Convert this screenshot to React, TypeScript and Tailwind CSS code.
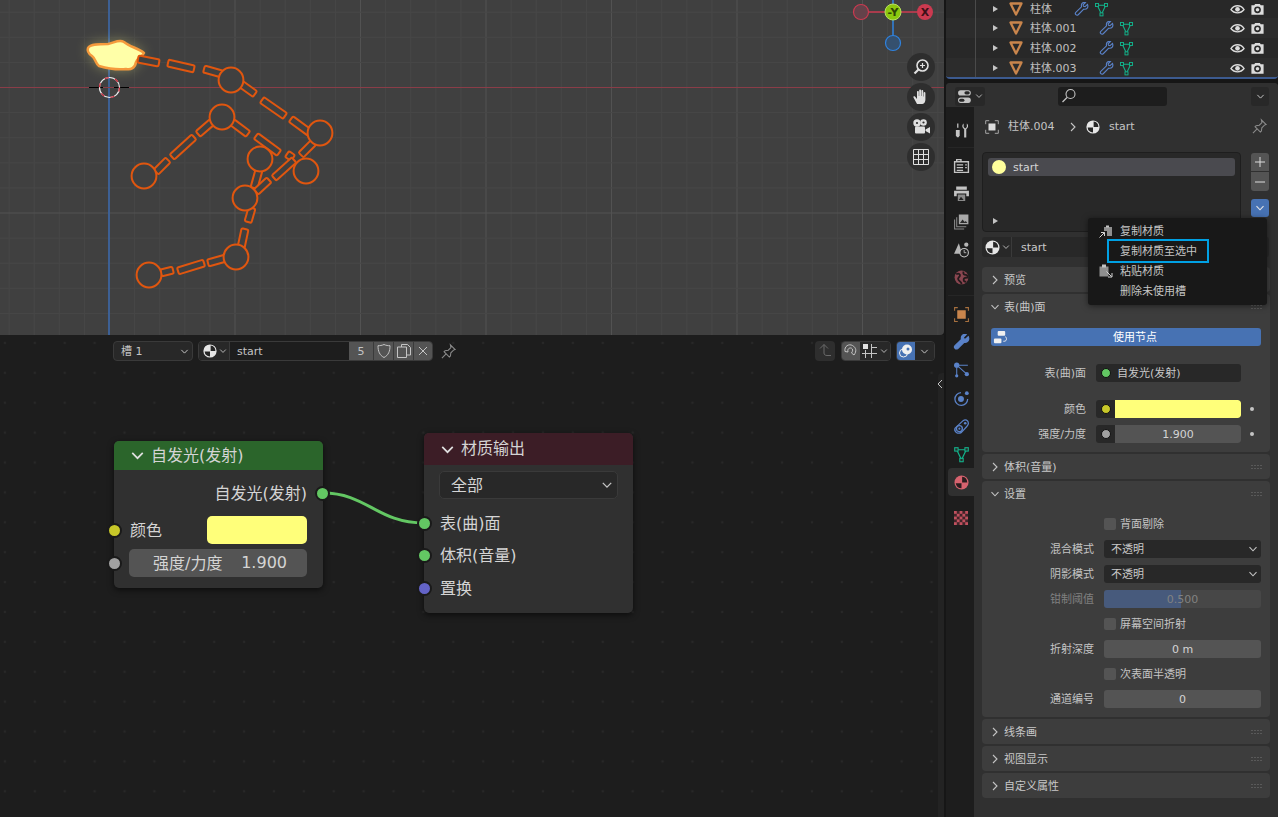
import type { ReactNode } from 'react'

const grey = '#c4c4c4'

function Svg({ size = 17, children }: { size?: number; children: ReactNode }) {
  return (
    <svg width={size} height={size} viewBox="0 0 16 16" fill="none" className="shrink-0">
      {children}
    </svg>
  )
}

function Chevron({ dir = 'down', size = 10, color = grey }: { dir?: 'down' | 'right'; size?: number; color?: string }) {
  return (
    <svg width={size} height={size} viewBox="0 0 10 10" fill="none" className="shrink-0">
      <path d={dir === 'down' ? 'M1.5 3.2 5 6.8l3.5-3.6' : 'M3 1 7 5 3 9'} stroke={color} strokeWidth="1.1" />
    </svg>
  )
}

function MatBall({ size = 16, color = '#e6e6e6', dark = '#262626' }: { size?: number; color?: string; dark?: string }) {
  return (
    <Svg size={size}>
      <circle cx="8" cy="8" r="6.6" fill={color} />
      <path d="M8.6 2.6A5.5 5.5 0 0 1 13.4 8H8.6z" fill={dark} />
      <path d="M2.6 8.6H8v4.8A5.5 5.5 0 0 1 2.6 8.6z" fill={dark} />
    </Svg>
  )
}

function MeshIcon({ size = 16 }: { size?: number }) {
  return (
    <Svg size={size}>
      <path d="M3.5 3.5h9L8 13z" stroke="#12b48c" strokeWidth="1.1" />
      <rect x="1.6" y="1.6" width="3.2" height="3.2" fill="#2b2b2b" stroke="#12b48c" />
      <rect x="11.2" y="1.6" width="3.2" height="3.2" fill="#2b2b2b" stroke="#12b48c" />
      <rect x="6.4" y="11.6" width="3.2" height="3.2" fill="#2b2b2b" stroke="#12b48c" />
    </Svg>
  )
}

function WrenchIcon({ size = 16, color = '#5a82c8', fill = false }: { size?: number; color?: string; fill?: boolean }) {
  return (
    <Svg size={size}>
      <path
        d="M14.4 2.6 11.8 5l-1.6-.4-.5-1.6 2.5-2.4C9.800 0 7.600 1.400 7.900 4.100L8 5.200 1.900 11c-1.500 1.700.7 3.900 2.600 2.600l5.900-5.900c3.400.6 5.200-2 4-5.100z"
        stroke={color}
        strokeWidth="1.200"
        fill={fill ? color : 'none'}
      />
    </Svg>
  )
}

function ObjectTri() {
  return (
    <Svg size={16}>
      <path d="M2.500 2.500h11L8 13.500z" stroke="#c9854c" strokeWidth="2.300" strokeLinejoin="round" />
    </Svg>
  )
}

function EyeIcon() {
  return (
    <Svg size={15}>
      <path d="M1 8c3.500-5.300 10.500-5.300 14 0-3.500 4.700-10.500 4.700-14 0z" stroke="#dcdcdc" strokeWidth="1.400" />
      <circle cx="8" cy="7.800" r="2.500" fill="#dcdcdc" />
    </Svg>
  )
}

function CamIcon() {
  return (
    <Svg size={15}>
      <path d="M1.500 3.500h3l1-1.500h5l1 1.500h3v10h-13z" fill="#dcdcdc" />
      <circle cx="8" cy="8.300" r="3.600" fill="#2b2b2b" />
      <circle cx="8" cy="8.300" r="1.900" fill="#dcdcdc" />
    </Svg>
  )
}

function PinIcon() {
  return (
    <Svg size={17}>
      <path d="M9.800 1.800 14.200 6.200l-1.500.5-2.500 2.500-.4 3-1 1-5-5 1-1 3-.4 2.500-2.500zM5.500 10.500 1.800 14.200" stroke="#8a8a8a" strokeWidth="1" />
    </Svg>
  )
}

function Grip() {
  return (
    <svg width="12" height="6" viewBox="0 0 12 6" className="shrink-0">
      {[0, 1, 2, 3].map((i) =>
        [1, 4].map((y) => <rect key={`${i}-${y}`} x={i * 3 + 0.5} y={y} width="1" height="1" fill="#777" />),
      )}
    </svg>
  )
}

const tabIcons: Record<string, ReactNode> = {
  tool: (
    <Svg>
      <path d="M4.500 1.500v4" stroke={grey} strokeWidth="1.200" />
      <path d="M2.700 7.500h3.600v5l-1 1.800H3.700l-1-1.800z" fill={grey} />
      <path d="M10 1.500v3.200l1.500 1.300L13 4.700V1.500c1.700 1.300 1.700 4-.5 5.200v7.800h-2V6.700C8.300 5.500 8.300 2.800 10 1.500z" fill={grey} />
    </Svg>
  ),
  render: (
    <Svg>
      <path d="M1.500 4.500h13v10h-13zM3.500 2.500h4v2h-4z" stroke={grey} strokeWidth="1.300" />
      <path d="M3.500 7.500h6M3.500 10h6M3.500 12.500h6M11.500 7.500h1.500M11.500 10h1.500" stroke={grey} strokeWidth="1.200" />
    </Svg>
  ),
  output: (
    <Svg>
      <path d="M3 1.500h10v3H3zM1 5.500h14v5h-2.500V8h-9v2.500H1z" fill={grey} />
      <path d="M4.500 9h7v6h-7z" fill="#8a8a8a" />
      <path d="m5.500 14 2-3 2.500 3z" fill="#222" />
    </Svg>
  ),
  layer: (
    <Svg>
      <path d="M5.500 1.500h9v9h-9z" fill="#a8a8a8" />
      <path d="m6.500 9.500 2.500-3.500 2 2.500 1-1 1.500 2z" fill="#2b2b2b" />
      <path d="M3.500 4v9h9M1.500 6v9h9" stroke="#8a8a8a" strokeWidth="1" />
    </Svg>
  ),
  scene: (
    <Svg>
      <path d="M5.500 2 1 12h7.500z" fill="#b5b5b5" />
      <circle cx="12.500" cy="3.500" r="2" fill="#b5b5b5" />
      <circle cx="10.500" cy="11" r="4" fill="#222" stroke={grey} strokeWidth="1" />
      <path d="M10.500 8.500V11h2" stroke={grey} strokeWidth="0.800" />
    </Svg>
  ),
  world: (
    <Svg>
      <circle cx="8" cy="8" r="6.500" fill="#8a4650" />
      <path d="M3 5c2.500-1.500 4 0 3.500 1.500S4 8 5 10s3.500 2 3 4.500M10 2.500c-1 2 .5 3 2 3s2 1.500 2 2.500c-2 0-4 0-4 2s1.500 2 2.500 2" stroke="#241a1c" strokeWidth="1.700" />
    </Svg>
  ),
  object: (
    <Svg>
      <rect x="4" y="4" width="8" height="8" fill="#c9854c" />
      <path d="M1.500 4.500v-3h3M11.500 1.500h3v3M14.500 11.500v3h-3M4.500 14.500h-3v-3" stroke="#a8713f" strokeWidth="1" />
    </Svg>
  ),
  modifier: <WrenchIcon size={17} color="#5a82c8" fill />,
  particles: (
    <Svg>
      <path d="M3.500 3H14M3.500 3v10M3.500 3l9 8" stroke="#5a82c8" strokeWidth="1" />
      <circle cx="3.500" cy="3" r="2.500" fill="#5a82c8" />
      <circle cx="3.500" cy="13" r="1.500" fill="#5a82c8" />
      <circle cx="13" cy="11.500" r="2" fill="#5a82c8" />
    </Svg>
  ),
  physics: (
    <Svg>
      <path d="M13.800 8.500A6 6 0 1 1 7.500 2.500" stroke="#5a82c8" strokeWidth="1.200" />
      <circle cx="7.500" cy="8.500" r="2.800" fill="#5a82c8" />
      <circle cx="13" cy="3" r="1.800" fill="#5a82c8" />
    </Svg>
  ),
  constraint: (
    <Svg>
      <path d="M2 9.500 9.500 2.500c2-1.500 5-.5 5 2.500 0 1-.5 2-1.500 3l-5 5.500C4.500 15.500.5 13 2 9.500z" stroke="#5a82c8" strokeWidth="1.200" />
      <circle cx="6" cy="10" r="2.800" stroke="#5a82c8" strokeWidth="1.300" />
      <circle cx="6" cy="10" r="1" fill="#5a82c8" />
      <circle cx="11.500" cy="5" r="1.200" fill="#5a82c8" />
    </Svg>
  ),
  data: <MeshIcon size={17} />,
  material: <MatBall size={17} color="#d6626e" dark="#2a1c1e" />,
  texture: (
    <svg width="14" height="14" viewBox="0 0 5 5" className="shrink-0">
      <rect width="5" height="5" fill="#40252a" />
      {[0, 2, 4, 6, 8, 10, 12, 14, 16, 18, 20, 22, 24].map((n) => (
        <rect key={n} x={n % 5} y={Math.floor(n / 5)} width="1" height="1" fill="#c0505e" />
      ))}
    </svg>
  ),
}

function Tab({ name, active }: { name: string; active?: boolean }) {
  return (
    <div className={`flex h-[28px] items-center justify-center rounded-l ${active ? 'bg-[#303030]' : ''}`}>
      {tabIcons[name]}
    </div>
  )
}

function Tabs() {
  return (
    <div className="flex w-[28px] shrink-0 flex-col bg-[#1d1d1d] pt-[9px] pl-[2px]">
      <Tab name="tool" />
      <div className="mt-[3px] mb-[3px] h-px bg-[#262626]" />
      <Tab name="render" />
      <Tab name="output" />
      <Tab name="layer" />
      <Tab name="scene" />
      <Tab name="world" />
      <div className="mt-[4px] mb-[4px] h-px bg-[#262626]" />
      <Tab name="object" />
      <Tab name="modifier" />
      <Tab name="particles" />
      <Tab name="physics" />
      <Tab name="constraint" />
      <Tab name="data" />
      <Tab name="material" active />
      <div className="mt-[8px]">
        <Tab name="texture" />
      </div>
    </div>
  )
}

function OutlinerRow({ name, h, bg, gap }: { name: string; h: string; bg: string; gap: string }) {
  return (
    <div className={`flex items-center pl-[47px] ${h} ${bg}`}>
      <span className="mr-[10px] h-0 w-0 border-y-[3px] border-l-[5px] border-y-transparent border-l-[#c4c4c4]" />
      <ObjectTri />
      <span className={`ml-[6px] ${gap} text-[#c0c0c0]`}>{name}</span>
      <WrenchIcon size={15} />
      <span className="ml-[5px]">
        <MeshIcon size={15} />
      </span>
      <div className="ml-auto flex items-center gap-[5px] pr-[13px]">
        <EyeIcon />
        <CamIcon />
      </div>
    </div>
  )
}

function Outliner() {
  return (
    <div className="relative h-[79px] shrink-0 overflow-hidden rounded-b border-b-2 border-[#3c5a8f] bg-[#282828]">
      <div className="absolute top-0 bottom-0 left-[29px] w-px bg-[#4a4a4a]" />
      <OutlinerRow name="柱体" h="h-[18px]" bg="bg-[#282828]" gap="w-[44px]" />
      <OutlinerRow name="柱体.001" h="h-[20px]" bg="bg-[#2c2c2c]" gap="w-[69px]" />
      <OutlinerRow name="柱体.002" h="h-[20px]" bg="bg-[#282828]" gap="w-[69px]" />
      <OutlinerRow name="柱体.003" h="h-[20px]" bg="bg-[#2c2c2c]" gap="w-[69px]" />
    </div>
  )
}

function PanelHeader({ title, open }: { title: string; open?: boolean }) {
  return (
    <div className="flex h-[25px] items-center pr-[7px] pl-[8px]">
      <Chevron dir={open ? 'down' : 'right'} />
      <span className="ml-[4px] pt-[2px] text-[#c8c8c8]">{title}</span>
      <span className="ml-auto">
        <Grip />
      </span>
    </div>
  )
}

function Panel({ title, open, children }: { title: string; open?: boolean; children?: ReactNode }) {
  return (
    <div className="rounded bg-[#3d3d3d]">
      <PanelHeader title={title} open={open} />
      {children}
    </div>
  )
}

function PropRow({ label, mt, dim, children }: { label: string; mt: string; dim?: boolean; children: ReactNode }) {
  return (
    <div className={`flex h-[18px] items-center ${mt}`}>
      <span className={`w-[112px] text-right ${dim ? 'text-[#808080]' : 'text-[#c4c4c4]'}`}>{label}</span>
      <div className="ml-[10px] w-[157px]">{children}</div>
    </div>
  )
}

function SocketRow({ label, mt, socket, children }: { label: string; mt: string; socket: string; children: ReactNode }) {
  return (
    <div className={`flex h-[18px] items-center ${mt}`}>
      <span className="w-[104px] text-right text-[#c4c4c4]">{label}</span>
      <div className="ml-[10px] flex h-[18px] w-[145px] items-center overflow-hidden rounded-[3px] bg-[#282828]">
        <span className={`mr-[4px] ml-[5px] h-[10px] w-[10px] shrink-0 rounded-full border border-[#111] ${socket}`} />
        {children}
      </div>
    </div>
  )
}

function Select({ value }: { value: string }) {
  return (
    <div className="flex h-[18px] items-center justify-between rounded-[3px] bg-[#282828] pr-[3px] pl-[7px] text-[#c8c8c8]">
      {value}
      <Chevron />
    </div>
  )
}

function NumField({ value }: { value: string }) {
  return <div className="flex h-[18px] items-center justify-center rounded-[3px] bg-[#545454] text-[#d4d4d4]">{value}</div>
}

function Check({ label, mt }: { label: string; mt: string }) {
  return (
    <div className={`flex h-[12px] items-center pl-[122px] ${mt}`}>
      <span className="h-[12px] w-[12px] rounded-[2px] bg-[#545454]" />
      <span className="ml-[4px] text-[#c4c4c4]">{label}</span>
    </div>
  )
}

function MaterialPopup() {
  return (
    <div className="absolute top-[135px] left-[142px] z-10 w-[179px] rounded-[3px] bg-[#181818] pt-[3px] text-[#c4c4c4] shadow-[0_1px_6px_rgba(0,0,0,0.5)]">
      <div className="relative flex h-[20px] items-center pl-[32px]">
        <span className="absolute left-[10px]">
          <Svg size={16}>
            <path d="M6 4h8v9H9V8H6z" fill="#8f8f8f" />
            <path d="M8 2.500h3v2H8z" fill="#c4c4c4" />
            <path d="M1.500 14.500 6.500 9.500M3 9.500h3.500V13" stroke="#d4d4d4" strokeWidth="1" />
          </Svg>
        </span>
        复制材质
      </div>
      <div className="flex h-[20px] items-center">
        <span className="z-10 ml-[19px] flex h-[24px] w-[102px] items-center border-2 border-[#00a0e3] pl-[11px] whitespace-nowrap">
          复制材质至选中
        </span>
      </div>
      <div className="relative flex h-[20px] items-center pl-[32px]">
        <span className="absolute left-[10px]">
          <Svg size={16}>
            <path d="M1.500 3.500h9v10h-9z" fill="#8f8f8f" />
            <path d="M4 1.500h4v3H4z" fill="#c4c4c4" />
            <path d="m8.500 8.500 5 5M14 10v4h-4" stroke="#d4d4d4" strokeWidth="1" />
          </Svg>
        </span>
        粘贴材质
      </div>
      <div className="flex h-[20px] items-center pl-[32px]">删除未使用槽</div>
      <div className="h-[4px]" />
    </div>
  )
}

function Properties() {
  return (
    <div className="relative flex min-h-0 flex-1 flex-col overflow-hidden rounded-t bg-[#303030]">
      <div className="flex h-[24px] shrink-0 items-center bg-[#303030] pt-[2px]">
        <div className="ml-[9px] flex h-[19px] w-[30px] items-center justify-center gap-px rounded-[3px] bg-[#282828]">
          <Svg size={17}>
            <rect x="1" y="2" width="12" height="5" rx="2.400" fill={grey} />
            <rect x="1" y="9" width="12" height="5" rx="2.400" fill={grey} />
            <rect x="7" y="3" width="5" height="3" rx="1.500" fill="#282828" />
            <rect x="2" y="10" width="5" height="3" rx="1.500" fill="#282828" />
          </Svg>
          <Chevron size={8} />
        </div>
        <div className="ml-[73px] flex h-[19px] w-[109px] items-center rounded-[3px] bg-[#1d1d1d] pl-[3px]">
          <Svg size={16}>
            <circle cx="9.500" cy="6" r="4.500" stroke={grey} strokeWidth="1.100" />
            <path d="M6 9.500 1.500 14" stroke={grey} strokeWidth="1.200" />
          </Svg>
        </div>
        <div className="ml-[84px] flex h-[19px] w-[18px] items-center justify-center rounded-[3px] bg-[#282828]">
          <Chevron size={9} />
        </div>
      </div>

      <div className="flex min-h-0 flex-1">
        <Tabs />
        <div className="flex-1 pr-[8px] pl-[8px]">
          <div className="flex h-[38px] items-center pt-[1px] text-[#c4c4c4]">
            <span className="ml-[3px]">
              <Svg size={14}>
                <rect x="3.500" y="3.500" width="7" height="7" fill="#dcdcdc" transform="scale(1.140)" />
                <path d="M.8 4.800v-4h4M11.200.8h4v4M15.200 11.200v4h-4M4.800 15.200h-4v-4" stroke={grey} strokeWidth="0.900" />
              </Svg>
            </span>
            <span className="ml-[9px] w-[51px]">柱体.004</span>
            <span className="ml-[9px]">
              <Chevron dir="right" size={10} />
            </span>
            <span className="ml-[7px]">
              <MatBall size={16} />
            </span>
            <span className="ml-[8px]">start</span>
            <span className="ml-auto mr-[2px]">
              <PinIcon />
            </span>
          </div>

          <div className="mt-[7px] flex h-[80px]">
            <div className="relative w-[259px] rounded-[4px] border border-[#1e1e1e] bg-[#282828] p-[5px]">
              <div className="flex h-[18px] items-center rounded-[3px] bg-[#4a4a4f] pl-[4px] text-[#d4d4d4]">
                <span className="h-[14px] w-[14px] rounded-full bg-[#ffff9c]" />
                <span className="ml-[7px]">start</span>
              </div>
              <span className="absolute bottom-[7px] left-[10px] h-0 w-0 border-y-[3px] border-l-[5px] border-y-transparent border-l-[#c4c4c4]" />
            </div>
            <div className="ml-[10px] flex w-[18px] flex-col pt-[1px]">
              <div className="flex h-[19px] items-center justify-center rounded-t-[3px] border-b border-[#303030] bg-[#545454]">
                <svg width="10" height="10" viewBox="0 0 10 10">
                  <path d="M5 0v10M0 5h10" stroke="#dcdcdc" />
                </svg>
              </div>
              <div className="flex h-[19px] items-center justify-center rounded-b-[3px] bg-[#545454]">
                <svg width="10" height="10" viewBox="0 0 10 10">
                  <path d="M0 5h10" stroke="#dcdcdc" />
                </svg>
              </div>
              <div className="mt-[8px] flex h-[18px] items-center justify-center rounded-[3px] bg-[#4772b3]">
                <Chevron color="#e6e6e6" />
              </div>
            </div>
          </div>

          <div className="mt-[5px] flex h-[20px] w-[287px] items-center overflow-hidden rounded-[3px] bg-[#282828]">
            <div className="flex h-full w-[30px] items-center justify-center gap-px border-r border-[#3a3a3a]">
              <MatBall size={17} />
              <Chevron size={8} />
            </div>
            <span className="ml-[9px] text-[#c8c8c8]">start</span>
          </div>

          <div className="mt-[10px] flex w-[288px] flex-col gap-[2px]">
            <Panel title="预览" />
            <Panel title="表(曲)面" open>
              <div className="px-[9px] pt-[9px]">
                <div className="relative flex h-[18px] items-center justify-center rounded-[3px] bg-[#4772b3] pl-[18px] text-white">
                  <span className="absolute left-[2px]">
                    <Svg size={15}>
                      <rect x="5" y="1" width="8" height="5" rx="1" fill="#f0f0f0" />
                      <rect x="1" y="9" width="8" height="5" rx="1" fill="#f0f0f0" />
                      <path d="M13 7c2 1 2 5-1 5h-1" stroke="#f0f0f0" />
                    </Svg>
                  </span>
                  使用节点
                </div>
              </div>
              <SocketRow label="表(曲)面" mt="mt-[18px]" socket="bg-[#63c763]">
                <span className="ml-[2px] text-[#c8c8c8]">自发光(发射)</span>
              </SocketRow>
              <div className="flex items-center">
                <SocketRow label="颜色" mt="mt-[18px]" socket="bg-[#c7c729]">
                  <span className="h-full flex-1 rounded-r-[3px] bg-[#ffff7a]" />
                </SocketRow>
                <span className="mt-[18px] ml-[9px] h-[4px] w-[4px] rounded-full bg-[#c4c4c4]" />
              </div>
              <div className="flex items-center">
                <SocketRow label="强度/力度" mt="mt-[7px]" socket="bg-[#a1a1a1]">
                  <span className="flex h-full flex-1 items-center justify-center bg-[#545454] text-[#d4d4d4]">1.900</span>
                </SocketRow>
                <span className="mt-[7px] ml-[9px] h-[4px] w-[4px] rounded-full bg-[#c4c4c4]" />
              </div>
              <div className="h-[9px]" />
            </Panel>
            <Panel title="体积(音量)" />
            <Panel title="设置" open>
              <Check label="背面剔除" mt="mt-[12px]" />
              <PropRow label="混合模式" mt="mt-[10px]">
                <Select value="不透明" />
              </PropRow>
              <PropRow label="阴影模式" mt="mt-[7px]">
                <Select value="不透明" />
              </PropRow>
              <PropRow label="钳制阈值" mt="mt-[7px]" dim>
                <div className="flex h-[18px] items-center justify-center rounded-[3px] bg-[linear-gradient(90deg,#475a7c_49%,#474747_49%)] text-[#828282]">
                  0.500
                </div>
              </PropRow>
              <Check label="屏幕空间折射" mt="mt-[10px]" />
              <PropRow label="折射深度" mt="mt-[10px]">
                <NumField value="0 m" />
              </PropRow>
              <Check label="次表面半透明" mt="mt-[10px]" />
              <PropRow label="通道编号" mt="mt-[10px]">
                <NumField value="0" />
              </PropRow>
              <div className="h-[9px]" />
            </Panel>
            <Panel title="线条画" />
            <Panel title="视图显示" />
            <Panel title="自定义属性" />
          </div>
        </div>
      </div>
      <MaterialPopup />
    </div>
  )
}

type Seg = [number, number, number, number]

const bones: Seg[] = [
  [168, 63, 194, 69],
  [204, 69, 222, 74],
  [241, 84, 255, 94],
  [262, 100, 285, 116],
  [291, 119, 310, 133],
  [314, 142, 301, 155],
  [287, 154, 293, 158],
  [294, 160, 274, 178],
  [232, 122, 248, 134],
  [256, 136, 279, 153],
  [212, 122, 198, 134],
  [194, 137, 172, 157],
  [168, 160, 156, 172],
  [259, 170, 254, 188],
  [269, 180, 256, 192],
  [252, 208, 248, 222],
  [245, 229, 241, 248],
  [226, 258, 208, 263],
  [204, 263, 178, 271],
  [173, 270, 161, 273],
]

const joints = [
  [222, 117],
  [144, 176],
  [260, 159],
  [306, 171],
  [245, 198],
  [231, 80],
  [320, 133],
  [236, 257],
  [149, 275],
]

const orange = '#e0560f'
const blobPath =
  'M88 48C90 44 100 44 108 44C114 43 119 39 124 42C130 47 138 48 144 53C142 57 137 58 136 62C135 68 131 70 126 69C118 70 106 68 99 66C95 63 96 59 92 56C89 54 87 51 88 48Z'

function Bone({ seg }: { seg: Seg }) {
  const [x1, y1, x2, y2] = seg
  const len = Math.hypot(x2 - x1, y2 - y1)
  const a = (Math.atan2(y2 - y1, x2 - x1) * 180) / Math.PI
  return (
    <rect
      x="0"
      y="-3.500"
      width={len}
      height="7"
      rx="1.500"
      fill="#404040"
      stroke={orange}
      strokeWidth="2"
      transform={`translate(${x1} ${y1}) rotate(${a})`}
    />
  )
}

function Scene() {
  const xs = Array.from({ length: 38 }, (_, i) => 109.5 + (i - 4) * 25.1)
  const ys = Array.from({ length: 16 }, (_, i) => 87.5 + (i - 3) * 25.1)
  return (
    <svg width="944" height="335" className="absolute inset-0">
      <rect width="944" height="335" fill="#404040" />
      {xs.map((x, i) => (
        <path key={x} d={`M${x} 0V335`} stroke={(i - 4) % 5 === 0 ? '#525252' : '#474747'} />
      ))}
      {ys.map((y, i) => (
        <path key={y} d={`M0 ${y}H944`} stroke={(i - 3) % 5 === 0 ? '#525252' : '#474747'} />
      ))}
      <path d="M109 0V335" stroke="#3d6094" strokeWidth="2" />
      <path d="M0 87.500H944" stroke="#8a3d48" />
      {bones.map((seg) => (
        <Bone key={seg.join('-')} seg={seg} />
      ))}
      {joints.map(([cx, cy]) => (
        <circle key={cx} cx={cx} cy={cy} r="12.400" fill="#404040" stroke={orange} strokeWidth="2" />
      ))}
      <defs>
        <filter id="glow" x="-50%" y="-80%" width="200%" height="260%">
          <feGaussianBlur stdDeviation="7" />
        </filter>
      </defs>
      <path d={blobPath} fill="#ffff88" opacity="0.4" filter="url(#glow)" />
      <path d={blobPath} fill="#ffffa8" stroke="#f59a3c" strokeWidth="2.500" strokeLinejoin="round" />
      <Bone seg={[138, 59, 159, 63]} />
      <path d="M89 87.500h14M114 87.500h15" stroke="#000" />
      <circle cx="109.500" cy="87.500" r="10" fill="none" stroke="#eeeeee" strokeWidth="1.200" />
      <circle cx="109.500" cy="87.500" r="10" fill="none" stroke="#d4283a" strokeWidth="1.200" strokeDasharray="4 6.500" />

      <path d="M861 12H925" stroke="#cb3a50" strokeWidth="1.500" />
      <path d="M893 0V43" stroke="#2f83e0" strokeWidth="1.500" />
      <circle cx="861" cy="12" r="7.500" fill="#64424a" stroke="#cb3a50" strokeWidth="1.200" />
      <circle cx="925" cy="12" r="8" fill="#cb3a50" />
      <circle cx="893" cy="43" r="7.500" fill="#35506e" stroke="#2f83e0" strokeWidth="1.200" />
      <circle cx="893" cy="12" r="8" fill="#8cc80f" stroke="#b8e060" />
      <text x="925" y="16" textAnchor="middle" fontSize="11" fontWeight="700" fill="#3d1018">X</text>
      <text x="893" y="16" textAnchor="middle" fontSize="11" fontWeight="700" fill="#2f4505">-Y</text>
    </svg>
  )
}

function NavButton({ children }: { children: ReactNode }) {
  return <div className="flex h-[28px] w-[28px] items-center justify-center rounded-full bg-[#2e2e2e]">{children}</div>
}

function Viewport() {
  return (
    <div className="relative h-[335px] shrink-0 overflow-hidden rounded-br">
      <Scene />
      <div className="absolute top-[53px] left-[907px] flex flex-col gap-[2px]">
        <NavButton>
          <svg width="18" height="18" viewBox="0 0 18 18" fill="none">
            <circle cx="10.500" cy="7.500" r="5.500" stroke="#e0e0e0" strokeWidth="1.600" />
            <path d="M10.500 5v5M8 7.500h5" stroke="#e0e0e0" strokeWidth="1.200" />
            <path d="M6.500 11.500 2.500 15.500" stroke="#e0e0e0" strokeWidth="2.200" />
          </svg>
        </NavButton>
        <NavButton>
          <svg width="18" height="18" viewBox="0 0 18 18" fill="#e0e0e0">
            <path d="M5 16 1.500 9.500c-.5-1.200 1-1.800 1.700-.8L5 11V4c0-1.300 1.800-1.300 1.800 0v4h.4V2.500c0-1.300 1.800-1.300 1.800 0V8h.4V3c0-1.300 1.800-1.300 1.800 0v5.500h.4V5c0-1.200 1.800-1.200 1.800 0v6.500c0 2-1 4.500-3 4.500z" />
          </svg>
        </NavButton>
        <NavButton>
          <svg width="20" height="18" viewBox="0 0 20 18" fill="#e0e0e0">
            <circle cx="6" cy="5" r="3.700" />
            <circle cx="12.500" cy="4.500" r="3.300" />
            <rect x="4" y="8.500" width="10" height="7" rx="1" />
            <path d="M14.500 11.500 19 9v6.500l-4.500-2.500z" />
            <circle cx="6" cy="5" r="1.100" fill="#2e2e2e" />
            <circle cx="12.500" cy="4.500" r="1.100" fill="#2e2e2e" />
          </svg>
        </NavButton>
        <NavButton>
          <svg width="16" height="16" viewBox="0 0 16 16" fill="none" stroke="#e0e0e0" strokeWidth="1">
            <path d="M.5.500h15v15H.5zM5.500.500v15M10.500.500v15M.5 5.500h15M.5 10.500h15" />
          </svg>
        </NavButton>
      </div>
    </div>
  )
}

function Socket({ color, side, y }: { color: string; side: 'l' | 'r'; y: string }) {
  return (
    <span
      className={`absolute h-[15px] w-[15px] rounded-full border-2 border-[#1a1a1a] ${color} ${y} ${
        side === 'l' ? '-left-[7px]' : '-right-[7px]'
      }`}
    />
  )
}

function EmissionNode() {
  return (
    <div className="absolute top-[106px] left-[114px] h-[147px] w-[209px] rounded-[5px] bg-[#303030] text-[16px] text-[#d4d4d4] shadow-[0_2px_6px_rgba(0,0,0,0.6)]">
      <div className="flex h-[29px] items-center rounded-t-[5px] bg-[#2b652b] pl-[16px]">
        <Chevron size={15} color="#e0e0e0" />
        <span className="ml-[6px] pt-[1px]">自发光(发射)</span>
      </div>
      <div className="mt-[12px] h-[24px] pr-[16px] text-right leading-[24px]">自发光(发射)</div>
      <div className="mt-[10px] flex h-[28px] items-center pr-[16px] pl-[16px]">
        <span className="pt-[1px]">颜色</span>
        <span className="ml-auto h-[28px] w-[100px] rounded-[5px] bg-[#ffff7a]" />
      </div>
      <div className="mx-[15px] mt-[5px] mr-[16px] flex h-[28px] items-center rounded-[5px] bg-[#545454] pr-[20px] pl-[24px]">
        <span className="pt-[1px]">强度/力度</span>
        <span className="ml-auto">1.900</span>
      </div>
      <Socket color="bg-[#63c763]" side="r" y="top-[45px]" />
      <Socket color="bg-[#c7c729]" side="l" y="top-[82px]" />
      <Socket color="bg-[#a1a1a1]" side="l" y="top-[115px]" />
    </div>
  )
}

function OutputNode() {
  return (
    <div className="absolute top-[98px] left-[424px] h-[180px] w-[209px] rounded-[5px] bg-[#303030] text-[16px] text-[#d4d4d4] shadow-[0_2px_6px_rgba(0,0,0,0.6)]">
      <div className="flex h-[32px] items-center rounded-t-[5px] bg-[#3c1d26] pl-[16px]">
        <Chevron size={15} color="#e0e0e0" />
        <span className="ml-[6px]">材质输出</span>
      </div>
      <div className="mx-[15px] mt-[6px] flex h-[28px] items-center justify-between rounded-[5px] border border-[#3a3a3a] bg-[#282828] pr-[4px] pl-[11px]">
        <span className="pt-[1px]">全部</span>
        <Chevron size={12} />
      </div>
      <div className="mt-[12px] flex h-[24px] items-center pt-[2px] pl-[16px]">表(曲)面</div>
      <div className="mt-[8px] flex h-[24px] items-center pt-[2px] pl-[16px]">体积(音量)</div>
      <div className="mt-[9px] flex h-[24px] items-center pt-[2px] pl-[16px]">置换</div>
      <Socket color="bg-[#63c763]" side="l" y="top-[83px]" />
      <Socket color="bg-[#63c763]" side="l" y="top-[115px]" />
      <Socket color="bg-[#6363c7]" side="l" y="top-[148px]" />
    </div>
  )
}

function NodeHeader() {
  return (
    <div className="flex h-[20px] items-center pl-[113px] text-[#c4c4c4]">
      <div className="flex h-[20px] w-[80px] items-center justify-between rounded-[4px] border border-[#3a3a3a] bg-[#282828] pr-[3px] pl-[7px]">
        槽 1
        <Chevron size={9} />
      </div>
      <div className="ml-[5px] flex h-[20px] items-center overflow-hidden rounded-[4px] border border-[#3a3a3a]">
        <div className="flex h-full w-[30px] items-center justify-center gap-px bg-[#282828]">
          <MatBall size={16} />
          <Chevron size={8} />
        </div>
        <div className="flex h-full w-[120px] items-center border-l border-[#3a3a3a] bg-[#1d1d1d] pl-[7px]">start</div>
        <div className="flex h-full w-[24px] items-center justify-center bg-[#545454]">5</div>
        <div className="flex h-full w-[20px] items-center justify-center border-l border-[#3a3a3a] bg-[#545454]">
          <Svg size={16}>
            <path d="M8 1.500c2.200 1 4 1.200 6 1.200 0 5.500-1.500 9.500-6 11.800C3.500 12.200 2 8.200 2 2.700c2 0 3.800-.2 6-1.200z" stroke={grey} />
          </Svg>
        </div>
        <div className="flex h-full w-[20px] items-center justify-center border-l border-[#3a3a3a] bg-[#545454]">
          <Svg size={16}>
            <path d="M5.500 4V1.500h6l3 3v7.500h-4M1.500 4H10.500v10.500H1.500z" stroke={grey} />
          </Svg>
        </div>
        <div className="flex h-full w-[19px] items-center justify-center border-l border-[#3a3a3a] bg-[#545454]">
          <svg width="10" height="10" viewBox="0 0 10 10">
            <path d="m1 1 8 8M9 1 1 9" stroke={grey} />
          </svg>
        </div>
      </div>
      <span className="ml-[7px]">
        <PinIcon />
      </span>
      <div className="ml-auto flex items-center pr-[9px]">
        <div className="flex h-[20px] w-[20px] items-center justify-center rounded-[4px] bg-[#2e2e2e]">
          <Svg size={16}>
            <path d="M3 5.500 7 1.500v8.500c0 1.500 1 2.500 3 2.500h4M7 1.500 11 5.500" stroke="#6a6a6a" />
          </Svg>
        </div>
        <div className="ml-[6px] flex h-[20px] overflow-hidden rounded-[4px] border border-[#3a3a3a]">
          <div className="flex w-[18px] items-center justify-center bg-[#545454]">
            <Svg size={16}>
              <path d="M2 8.500C1 3 6 .5 9.500 2.500S14 8 11 12L8.500 10c1.500-2 1.500-4 0-4.800S4 5.500 5 9z" stroke={grey} />
            </Svg>
          </div>
          <div className="flex w-[30px] items-center justify-center gap-[2px] bg-[#282828]">
            <Svg size={16}>
              <rect x="1" y="1" width="5" height="5" fill="#e0e0e0" />
              <path d="M9.500 1v14M3.500 7v8M0 10.500h15M9 4.500h6" stroke={grey} />
            </Svg>
            <Chevron size={8} />
          </div>
        </div>
        <div className="ml-[5px] flex h-[20px] overflow-hidden rounded-[4px] border border-[#3a3a3a]">
          <div className="flex w-[18px] items-center justify-center bg-[#4772b3]">
            <Svg size={16}>
              <circle cx="9" cy="6.500" r="5" fill="#f0f0f0" />
              <circle cx="5.500" cy="10" r="4" stroke="#f0f0f0" />
              <circle cx="10" cy="6" r="1.500" fill="#4772b3" />
            </Svg>
          </div>
          <div className="flex w-[19px] items-center justify-center bg-[#282828]">
            <Chevron size={9} />
          </div>
        </div>
      </div>
    </div>
  )
}

function NodeEditor() {
  return (
    <div className="relative flex-1 overflow-hidden bg-[#1d1d1d] bg-[radial-gradient(circle,#282828_1.4px,transparent_1.6px)] bg-[length:29.9px_29.9px] bg-[position:-10px_-7px] pt-[6px]">
      <NodeHeader />
      <svg width="110" height="40" viewBox="0 0 110 40" fill="none" className="absolute top-[153px] left-[319px]">
        <path d="M4 5C48 5 58 35 105 35" stroke="#63c763" strokeWidth="3" />
      </svg>
      <EmissionNode />
      <OutputNode />
      <div className="absolute top-[38px] right-0 bottom-0 w-[6px] rounded-tl bg-[#232323]" />
      <span className="absolute top-[44px] right-[1px]">
        <svg width="6" height="10" viewBox="0 0 6 10" fill="none">
          <path d="M5 1 1 5l4 4" stroke={grey} />
        </svg>
      </span>
    </div>
  )
}

export default function App() {
  return (
    <div className="flex h-[817px] w-[1278px] overflow-hidden bg-[#161616] font-['DejaVu_Sans','Noto_Sans_CJK_SC',sans-serif] text-[11px] leading-none">
      <div className="flex w-[944px] shrink-0 flex-col">
        <Viewport />
        <NodeEditor />
      </div>
      <div className="ml-[2px] flex flex-1 flex-col gap-[4px]">
        <Outliner />
        <Properties />
      </div>
    </div>
  )
}
